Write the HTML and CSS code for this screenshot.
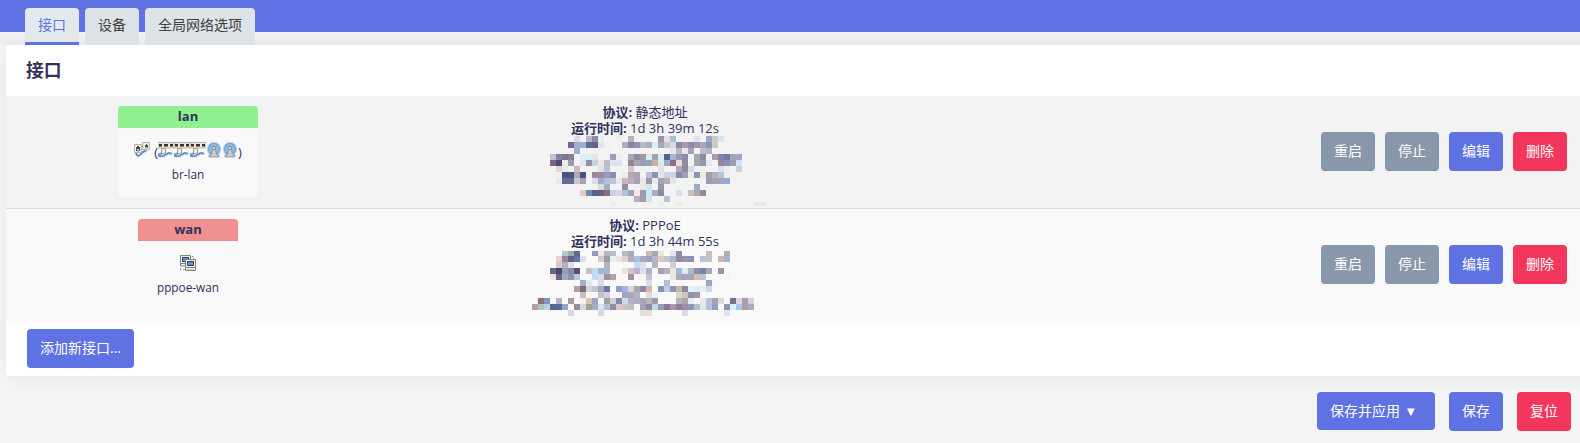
FILE: index.html
```html
<!DOCTYPE html>
<html lang="zh-CN">
<head>
<meta charset="utf-8">
<title>接口</title>
<link rel="stylesheet" href="styles.css">
</head>
<body>
<svg class="defs" width="0" height="0">
  <symbol id="ethernet" viewBox="0 0 16 16">
    <path d="M2 9C2 15 5 14.500 7 12S10 9 13 8" fill="none" stroke="#5f8cc6" stroke-width="2"/>
    <path d="M.5 2.500h7v8h-7zM8.500 .5h7v7h-7z" fill="#f1f1e9" stroke="#b5b5ae"/>
    <path d="M2 5h1v-1h2v1h1v4h-4zM11 3h1v-1h1v1h1v3h-3z" fill="#4c4c48"/>
    <path d="M3 7h2v4h-2zM11 5h2v4h-2z" fill="#b5b9bc"/>
  </symbol>
  <symbol id="switch" viewBox="0 0 16 16">
    <path d="M0 .5h16v5.500h-16z" fill="#e9e9df" stroke="#b6b6ad"/>
    <path d="M1 2h3v3h-3zM6 2h4v3h-4zM12 2h3v3h-3z" fill="#33332f"/>
    <path d="M1 4.500h3M6 4.500h4M12 4.500h3" stroke="#a28d3e"/>
    <path d="M3.500 6.500h4v5h-4z" fill="#ecece8" stroke="#a2a29b"/>
    <path d="M4 11.500Q0 12 1 14Q5 15 8 12.500T14 12" fill="none" stroke="#6693ca" stroke-width="2"/>
  </symbol>
  <symbol id="wifi" viewBox="0 0 16 16">
    <circle cx="8" cy="7" r="7" fill="#a9c9ea"/>
    <circle cx="8" cy="7" r="5.300" fill="#a4c6ea" stroke="#6d9fd8" stroke-width="1.300"/>
    <circle cx="8" cy="7" r="3.300" fill="none" stroke="#7eaadd"/>
    <path d="M7 7h2l2 6h2v2h-10v-2h2z" fill="#c9cccd" stroke="#8a9198" stroke-width=".8"/>
    <circle cx="8" cy="6" r="1.600" fill="#e4e4df" stroke="#7c858f"/>
  </symbol>
  <symbol id="tunnel" viewBox="0 0 16 16">
    <path d="M.5 .5h10v8h-10zM.5 8.500h6v2.500h-6z" fill="#eeeee6" stroke="#85857c"/>
    <path d="M2.500 2.500h6v4h-6z" fill="#6f90c0" stroke="#26406f"/>
    <path d="M11.500 1.500h2v3M.5 13v3M3 14.500h2" fill="none" stroke="#70a0d4" stroke-dasharray="2 1"/>
    <path d="M5.500 4.500h10v8h-10zM5.500 12.500h10v3h-10z" fill="#eeeee6" stroke="#85857c"/>
    <path d="M7.500 6.500h6v4h-6z" fill="#6f90c0" stroke="#26406f"/>
    <path d="M7 14.500h7" stroke="#c6c6bd"/>
  </symbol>
</svg>
<header class="topbar">
  <nav class="tabs">
    <a class="tab tab-active">接口</a>
    <a class="tab">设备</a>
    <a class="tab">全局网络选项</a>
  </nav>
</header>
<main class="card">
  <h3 class="title">接口</h3>
  <section class="row row-lan">
    <div class="badge-cell">
      <div class="badge badge-lan">
        <div class="badge-head">lan</div>
        <div class="icons">
          <svg class="icon icon-lead"><use href="#ethernet"/></svg><span>(</span><svg class="icon"><use href="#switch"/></svg><svg class="icon"><use href="#switch"/></svg><svg class="icon"><use href="#switch"/></svg><svg class="icon"><use href="#wifi"/></svg><svg class="icon"><use href="#wifi"/></svg><span>)</span>
        </div>
        <div class="device">br-lan</div>
      </div>
    </div>
    <div class="info">
      <div><b>协议:</b> 静态地址</div>
      <div><b>运行时间:</b> 1d 3h 39m 12s</div>
      <svg class="mosaic" id="lan-mask" viewBox="-19 0 252 72"></svg>
    </div>
    <div class="actions">
      <button class="btn neutral">重启</button><button class="btn neutral">停止</button><button class="btn">编辑</button><button class="btn danger">删除</button>
    </div>
  </section>
  <section class="row row-wan">
    <div class="badge-cell">
      <div class="badge badge-wan">
        <div class="badge-head">wan</div>
        <div class="icons"><svg class="icon"><use href="#tunnel"/></svg></div>
        <div class="device">pppoe-wan</div>
      </div>
    </div>
    <div class="info">
      <div><b>协议:</b> PPPoE</div>
      <div><b>运行时间:</b> 1d 3h 44m 55s</div>
      <svg class="mosaic" id="wan-mask" viewBox="-19 1 252 72"></svg>
    </div>
    <div class="actions">
      <button class="btn neutral">重启</button><button class="btn neutral">停止</button><button class="btn">编辑</button><button class="btn danger">删除</button>
    </div>
  </section>
  <div class="add"><button class="btn btn-add">添加新接口...</button></div>
</main>
<footer class="page-actions">
  <button class="btn btn-apply">保存并应用<span class="caret">▼</span></button>
  <button class="btn">保存</button>
  <button class="btn danger">复位</button>
</footer>
<script src="mosaic.js"></script>
</body>
</html>
```

FILE: styles.css
```css
* { box-sizing: border-box; }
body {
  margin: 0;
  height: 443px;
  overflow: hidden;
  background: #f4f5f7;
  color: #32325d;
  font-family: "Open Sans", "Noto Sans CJK SC", sans-serif;
  font-size: 13px;
}
.defs { display: block; height: 0; }
.topbar {
  height: 45px;
  padding: 8px 0 0 25px;
  background: linear-gradient(#5e72e4 32px, #f1f2f4 32px, #eceef0 45px);
}
.tabs { display: flex; gap: 6px; }
.tab {
  height: 37px;
  padding: 0 13px;
  border-radius: 4px 4px 0 0;
  background: #dce3e9;
  color: #404040;
  font-size: 14px;
  line-height: 33px;
  white-space: nowrap;
}
.tab-active {
  background: #e4e9ee;
  color: #5e72e4;
  border-bottom: 3px solid #5e72e4;
}
.card {
  height: 331px;
  margin-left: 6px;
  margin-right: -20px;
  background: #fff;
  border-radius: 4px;
  box-shadow: 0 4px 18px rgba(60, 70, 80, .07);
}
.title {
  height: 51px;
  margin: 0;
  padding-left: 20px;
  font-size: 17.8px;
  font-weight: 700;
  line-height: 51px;
}
.row {
  display: grid;
  grid-template-columns: 364px 550px 647px;
  height: 113px;
}
.row-lan { background: #f3f3f3; border-bottom: 1px solid #ddd; }
.row-wan { height: 112px; background: #f9f9f9; }
.badge-cell { display: flex; justify-content: center; padding-top: 10px; }
.badge {
  height: 91px;
  overflow: hidden;
  border-radius: 4px;
  background: #f9f9f9;
  text-align: center;
}
.badge-lan { width: 140px; }
.badge-wan { width: 100px; }
.badge-head { height: 22px; background: #90f090; font-weight: 700; line-height: 21px; }
.badge-wan .badge-head { background: #f09090; }
.icons {
  display: flex;
  justify-content: center;
  height: 16px;
  margin-top: 14px;
  line-height: 20px;
}
.icon { width: 16px; height: 16px; }
.icon-lead { margin-right: 4px; }
.device { margin-top: 7px; font-size: 11.8px; line-height: 18px; }
.info { padding-top: 8px; line-height: 16px; text-align: center; }
.row-wan .mosaic { margin-top: 2px; }
.mosaic { display: block; width: 252px; height: 72px; margin-left: 161px; shape-rendering: crispEdges; }
.actions { display: flex; align-items: flex-start; justify-content: flex-end; gap: 10px; padding-top: 36px; }
.btn {
  width: 54px;
  height: 39px;
  padding: 0 0 2px;
  border: 0;
  border-radius: 4px;
  background: #5e72e4;
  color: #fff;
  font: 14px/36px "Open Sans", "Noto Sans CJK SC", sans-serif;
}
.neutral { background: #8898aa; }
.danger { background: #f5365c; }
.add { padding: 8px 21px; }
.btn-add { width: 107px; }
.page-actions { display: flex; justify-content: flex-end; gap: 14px; padding: 16px 9px 0 0; }
.btn-apply { width: 118px; height: 38px; padding: 0 0 1px 13px; text-align: left; }
.caret { margin-left: 7px; font: 10px/1 "DejaVu Sans", sans-serif; vertical-align: 1px; }
```

FILE: mosaic.js
```js
// Each line is one band of 6px cells: the column, then its colour.
const masks = {
  "lan-mask": [
    "4 e6d6d4 6 b4b8cc 7 8d8a9f 8 dff4ee 11 e8eef6 13 bcb0b8 18 a0929f 19 e6dfe2 20 a5c0d9 24 dfe4ef 26 9ca8ca 27 cdcac9 28 d2e7f5",
    "3 79688a 4 9cb1ce 5 9cb1ce 6 636891 7 626288 8 ece0e4 9 e7f3f3 12 b4acc5 13 8d83a5 14 8f93ae 15 acbfc2 16 b3aabc 17 d4f3f5 18 a8a8bd 19 c4c5d2 20 d7d8e6 21 8a8aa4 22 a99aae 23 92889f 24 9d97a9 25 a9a5bb 26 8c9ab0 27 cbc9cc",
    "4 9cb1ce 20 e5e7e9 21 b8b4c0 22 efe3e3 23 a5a2bd 25 b8bfd3 26 b5b4c2",
    "0 bcc4cf 1 8285a2 2 7a7895 3 8b8090 5 e5ebf3 6 d4f2f3 7 dceae4 10 9b9cc2 11 eef0e8 13 a9a4b8 14 8d8a9f 15 9d9aab 16 e0e9e4 17 98a7ae 18 dfe9ed 19 516399 20 a5b6d2 21 9c97b3 22 8c8aa8 24 a3a8b5 25 8f8ba3 27 a79dac 28 8082a6 29 6f7ba7 30 a5a4b7 31 a5a4b7",
    "0 7c677f 1 4d4c7a 2 f3eade 3 9d9ab3 5 e2e8f1 6 9090ad 7 cbd3da 8 eceadb 9 c1bcc8 10 dde6e4 11 dde3ee 13 98888f 14 a5a2b6 15 91a2b5 16 94a6b9 17 c6b1ab 18 dceae4 19 95abcd 20 8a6f83 21 ecdad7 22 8f8aa8 24 a2a9b5 25 9b95ab 26 e2e8f5 28 908ba2 29 8a93b5 30 9a9db5 31 cbe8f3",
    "1 e6d5d5 2 dfeef2 4 cfbcb8 8 e0e0ee 9 b9c3d1 13 cccbd5 18 e0e1e8 21 a8a9c3 22 8f8a9f 23 dcd9df 28 dbe0ec 29 f0ede8 31 d2cdd6",
    "2 46508a 3 4e5482 4 a8a9bf 5 4f4c80 7 9b8aa3 8 a08c9c 9 9b9cbd 10 8e8aa9 12 e8f1e9 13 b4a7b5 14 a9a6b0 16 b9c1d2 17 8d94b0 18 dee5e9 19 ccd3e1 20 ccd3e1 21 8e88a0 22 a1a0bb 23 e2f0ea 24 8f95b0 25 f0e9de 26 a99cab 27 b6b2b8 28 b5c6d9 29 f1ede2",
    "1 f3e7da 2 68678f 3 68678f 4 c8c6cc 5 a8a1b6 7 ddd9e6 8 9faecb 9 b5c1da 10 c3c2d9 11 e2ebf0 12 ceb6b3 13 b8b0c3 14 a9a2b6 15 f2e6e1 16 9a9bb3 17 e5eeea 18 a5a2b5 19 c2aaa8 20 dfe9ee 26 9b9cb8 27 a3a3b7 28 a5a6b9 29 8facda",
    "8 e3d6d6 9 9dadcb 12 968ca1 15 f0e6e2 16 cde6f0 18 9793ab 24 9ba9cd",
    "5 e6ccc8 6 6e8cb5 7 615e8b 8 69608a 9 8a6e80 10 c5d3e2 11 d8d8e0 12 abc4dc 13 9fa0b9 14 f1eadd 15 9d9ab0 16 cde6f0 17 a9aec2 18 928a9f 21 d3e2f2 23 cfbfbb 24 b1a5b1 25 8f8b98",
    "14 b5afc2 15 a39dad 16 cde6f0 19 b5c3da",
    "10 ececec 18 ededed 21 ececec 34 e9e9e9 35 e9e9e9"
  ],
  "wan-mask": [
    "2 b7c5cc 3 92adb1 4 5f6a90 7 9899b8 8 f3e7e3 9 b8b3c4 10 b7bdd0 12 b5b9c4 13 a1abb5 16 d1bab7 17 aaa4b4 18 efe5d5 20 e1e5ed 21 8e90ab 26 c2bfc9 29 b8abb9",
    "1 ebcfc8 2 91869b 3 6f5d80 4 587aa5 5 dfdfe6 8 d2cbd0 9 9a9ba7 10 dff5f6 11 efe4e0 12 dbd3d9 13 b3abbf 14 a8c2df 15 aaa8c2 16 9ba0bf 17 bab5c8 18 dfc9c0 19 c4c5d2 20 a5bad2 21 8d8ba3 22 9b93a9 23 8f91b2 25 b4c3da 26 c2c3c8 28 d1b5b0 29 a4b6d3",
    "1 dcc9ca 2 b5b0c0 3 dbe0ec 9 b7b4c4 14 c8d8ee 15 dfe0ea 17 b6b3c8 20 d6cdd1",
    "0 6d6580 1 48466f 2 9d99b5 3 8c87a8 4 565079 6 c7c0c4 7 c1dbf7 8 a2b5d0 9 a2b7cb 12 eee2db 13 cfc5cd 14 b9b6c8 15 d9e0f0 16 b3b2c7 18 a89db1 19 b3b0bf 20 ece3e3 21 9dbbe0 22 dfe9f3 23 abb9cf 24 8d8ba9 25 6f87ab 26 a8a9b9 28 9b93ab",
    "0 efdfdb 1 6a6680 2 a3a6bd 3 8b91ae 4 bac4d8 7 c1dbf7 8 d2d9e6 9 a4919f 10 afa2ae 13 a3939f 15 f5f7e6 16 c6c1cc 20 ede3e3 21 aaa9c2 22 a6a3b8 23 aba7b8 24 d5bdb8 25 bfc4ce 29 f3f5f9",
    "5 9fb0cd 6 e2e7ef 8 dddbe4 16 d9dceb 19 b3bfda 26 9ca2cc",
    "4 b59da1 5 806c79 6 d3d7cf 7 b8c8d2 8 a4a9bf 9 6d78a5 11 8f9fd0 12 9fb4d8 13 dcd3dc 14 aca4b5 15 8c8aa8 16 d9b5b0 18 8d91b2 19 b9cfe8 20 9294b4 21 c3b7a7 22 908599 23 dff4f5 24 e5e8f3 25 e2f2ee 26 c8dde8",
    "5 cfbcc0 8 c9c0cc 9 cdd1df 12 9fa5c2 13 a9a6bc 14 b4b4c8 16 e2dcdb 17 e6f6f8 21 ddd5d0 22 d0c0c0 23 9590a7 24 a099ab",
    "-2 8a707f -1 7f97c5 1 b6b5c7 3 ab9aa3 5 f5f3e9 6 dcc4b9 7 9ca5c9 9 a09fa4 10 cdd1de 11 8a88a6 12 c8dde8 13 b5b4c7 14 b0abbf 15 aaa6b8 16 bab4be 17 9a9baa 21 bcb0b8 22 a9a6b3 23 e6eef8 25 ece8e4 26 b8c4dc 27 a6a0b4 28 dddcd6 30 7c6c90 31 d9d4ea 32 b09da2 33 d0d4e2",
    "-3 b59da1 -2 b3c3c9 -1 bcd2da 0 5b6593 1 5d6a96 2 90a5c9 4 9a8b98 5 d5dbe0 6 a0a298 7 a5abc2 8 e0e0ea 9 b0c0da 10 988898 11 dcc8c8 12 d0c0c8 13 c0bec4 15 a5a2b8 16 918a9f 17 c0d8ea 18 9a9cb5 19 8a7a88 20 a29db2 21 908090 22 9890ac 23 9595b2 24 b4bfd3 25 e5e8e0 26 b4c3da 27 9f9db5 29 9a94a8 30 d9f2f8 31 a8c8e8 32 b09da2 33 a9adbd",
    "3 d8d8e8 8 d8d8de 15 e5dedb 16 e5dedb 22 dcdae4 29 d5e7f5"
  ]
};

for (const [id, bands] of Object.entries(masks)) {
  const svg = document.getElementById(id);
  bands.forEach((band, y) => {
    const cells = band.split(" ");
    for (let i = 0; i < cells.length; i += 2) {
      const rect = document.createElementNS("http://www.w3.org/2000/svg", "rect");
      rect.setAttribute("x", cells[i] * 6);
      rect.setAttribute("y", y * 6);
      rect.setAttribute("width", 6);
      rect.setAttribute("height", y === 11 ? 4 : 6);
      rect.setAttribute("fill", "#" + cells[i + 1]);
      svg.append(rect);
    }
  });
}
```
